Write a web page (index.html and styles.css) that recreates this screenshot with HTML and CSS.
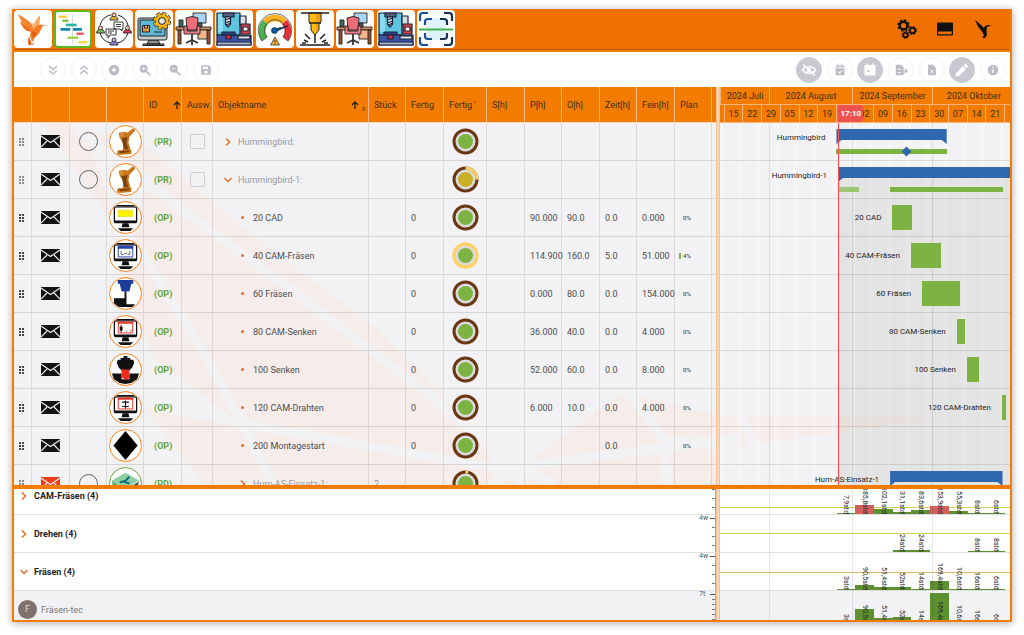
FILE: index.html
```
<!DOCTYPE HTML>
<html lang="de">

<head>
  <meta charset="utf-8">
  <title>Hummingbird Planung</title>
  <link rel="stylesheet" href="styles.css">
</head>

<body>

  <svg class="sprite" aria-hidden="true">
    <symbol id="bird" viewBox="0 0 38 38">
      <path fill="#f58634" d="M4 4l8 5 6 5 2 7-4 0C10 16 6 10 4 4z"/>
      <path fill="#ee6a1a" d="M6 11l9 8 4 3-6-1C9 18 7 15 6 11z"/>
      <path fill="#ffa45c" d="M26 5l-4 5-3 7 1 3 4-2c2-4 2-9 2-13z"/>
      <path fill="#f47b20" d="M21 18l3-3 3-.500 2 1 4.500-.500-5 1.500-1.500 3-2 4-4 4-3 5-2-7 1-5z"/>
      <path fill="#e8590c" d="M15 26l2.500 8 3-1-1 1.500-5 .5-.5-4z"/>
      <path fill="#ffb980" d="M18 14l2-2 0 8z"/>
      <path fill="#d95a10" d="M18 22l5 1-4 5z"/>
    </symbol>
    <symbol id="gantt" viewBox="0 0 38 38">
      <path stroke="#ccd3d6" d="M18.500 3v32"/>
      <path fill="#ffc928" d="M3 4h9v2.500H3z"/>
      <path fill="#7cc242" d="M7 8.500h7V11H7z"/>
      <path fill="#26b5a5" d="M11 13h12v3H11z"/>
      <path fill="#1587b5" d="M5 18h11v3H5zm14 0h10v3H19z"/>
      <path fill="#ec4a4a" d="M23 23h8v2.500h-8z"/>
      <path fill="#9ccc3c" d="M13 27.500h12V30H13z"/>
      <path fill="#ffd23e" d="M25 32.500h10V35H25z"/>
    </symbol>
    <symbol id="team" viewBox="0 0 38 38">
      <circle cx="19" cy="19" r="14.500" fill="none" stroke="#222" stroke-dasharray="16 6.800" stroke-dashoffset="-3.500"/>
      <g stroke="#222" stroke-width=".9">
        <path fill="#f5b731" d="M15 10c0-5 8-5 8 0z"/><circle cx="19" cy="5" r="2" fill="#ffd9b3"/>
        <path fill="#8d84d8" d="M15 35c0-5 8-5 8 0z"/><circle cx="19" cy="30" r="2" fill="#c9b8ef"/>
        <path fill="#86c25a" d="M1.500 23c0-5 8-5 8 0z"/><circle cx="5.500" cy="18" r="2" fill="#ffd9b3"/>
        <path fill="#e5395b" d="M28.500 23c0-5 8-5 8 0z"/><circle cx="32.500" cy="18" r="2" fill="#ffd9b3"/>
        <path fill="#fff" d="M19 12h9v7h-1v2l-2-2h-6zM11 19h10v6h-6l-2 3v-3h-2z"/>
        <path fill="none" d="M21 14.500h5m-5 2h5M13 21h6m-6 2h4"/>
      </g>
    </symbol>
    <symbol id="pcgear" viewBox="0 0 38 38">
      <g stroke="#222" stroke-linejoin="round">
        <path fill="#8b949c" d="M14 30h9l2 4H12zM8 34h21v1.500H8z"/>
        <rect x="3" y="8" width="29" height="22" rx="2" fill="#c3cbd0"/>
        <path fill="#5cb8d6" d="M5 10h25v16H5z"/>
        <path fill="#e39a3d" d="M7.500 15.500h7V22h-7z"/><path fill="#f7d07a" d="M9.500 15.500h3v2.500h-3z"/>
        <path fill="none" d="M19 22h8"/>
      </g>
      <circle cx="27" cy="11" r="7.600" fill="none" stroke="#222" stroke-width="3" stroke-dasharray="4 1.970"/>
      <circle cx="27" cy="11" r="7" fill="#f7b512" stroke="#222" stroke-width=".8"/>
      <circle cx="27" cy="11" r="7.400" fill="none" stroke="#f7b512" stroke-width="2" stroke-dasharray="3.200 2.610" stroke-dashoffset="-.4"/>
      <circle cx="27" cy="11" r="3.400" fill="#e9edf0" stroke="#222"/>
    </symbol>
    <symbol id="desk" viewBox="0 0 38 38">
      <g stroke="#222" stroke-width=".9" stroke-linejoin="round">
        <path fill="#a8d4f5" d="M18 3h13v10H18z"/><path fill="#555" d="M23 13h4v4h-4z"/>
        <path fill="#3d6b58" d="M4 10h4v7H4z"/>
        <path fill="#d98b62" d="M1 17h35v3H1z"/><path fill="#f2b58e" d="M23 20h11v9H23z"/>
        <path fill="#9c4f30" d="M3 20h3v14H3zM32 20h3v14h-3z"/>
        <path fill="#ec6c77" d="M11 8q6-3 12 0l-1 12H12z"/>
        <path fill="#ef7d86" d="M9 16h3v5h10v-5h3v8H9z"/>
        <path fill="none" stroke-width="1.800" stroke="#333" d="M17 24v6l-6 3m6-3l6 3m-6-3v5"/>
      </g>
    </symbol>
    <symbol id="cnc" viewBox="0 0 38 38">
      <g stroke="#1c2238" stroke-width="1.200" stroke-linejoin="round">
        <path fill="#5dc5e0" d="M2 3h23v22H2z"/><path fill="#8adcf0" stroke="none" d="M3 4h5v18H3z"/>
        <path fill="#55607e" d="M8 3h11v4H8z"/><path fill="#dfe5ea" d="M10.500 7h5v7L13 17l-2.500-3z"/>
        <path d="M10 10l6-2m-6 5l6-2m-5 4l5-2" fill="none"/>
        <path fill="#d7dde2" d="M25 6h6v9h-6z"/><path fill="#e0444e" d="M26 14h9v10h-9z"/>
        <path fill="#fff" d="M28 17h5v4h-5z"/>
        <path fill="#3a55a6" d="M2 25h34v10H2z"/><path fill="#2f4488" d="M7 22h13v3H7z"/>
        <path fill="#e5232e" d="M11 25h5v4h-5z"/><path fill="#dfe5ea" d="M23 26h12v3H23z"/>
        <path fill="#a5b2d3" d="M2 32h34v3H2z"/>
      </g>
    </symbol>
    <symbol id="gauge" viewBox="0 0 38 38">
      <g fill="none" stroke-width="6.500">
        <path stroke="#4caf50" d="M8.500 29A13.500 13.500 0 0 1 9.500 12"/>
        <path stroke="#fbb01e" d="M9.500 12A13.500 13.500 0 0 1 28.500 12"/>
        <path stroke="#e5323c" d="M28.500 12A13.500 13.500 0 0 1 29.500 29"/>
      </g>
      <path fill="none" stroke="#333" stroke-width=".7" d="M6 31A16.800 16.800 0 1 1 32 31L27 27A10.500 10.500 0 1 0 11 27z"/>
      <path fill="#0d4a86" stroke="#122" stroke-width=".6" d="M18 19l14-3-13 6z"/>
      <circle cx="18.500" cy="20.500" r="3" fill="#0d5aa7" stroke="#122" stroke-width=".6"/>
      <path fill="#f9b233" stroke="#333" stroke-width=".8" d="M19 27l4.500 8h-9z"/>
      <path stroke="#222" d="M19 30v2.500m0 .8v1"/>
    </symbol>
    <symbol id="laser" viewBox="0 0 38 38">
      <g stroke="#222" stroke-linejoin="round">
        <path fill="#fdbb12" d="M13 3h12v9l-2 2v6l-4 5-4-5v-6l-2-2z"/>
        <path fill="#f39c12" stroke="none" d="M20 4h4v8l-2 2v5l-2 3z"/>
        <path fill="none" stroke-width="1.500" d="M5 3h28M19 25v8M4 35h30M8 30l4 2M9 24l5 5M6 33h4M30 30l-4 2M29 24l-5 5M32 33h-4M13 13h12"/>
      </g>
    </symbol>
    <symbol id="scan" viewBox="0 0 38 38">
      <path fill="#dff4fa" d="M10 8h18v22H10z"/>
      <g fill="none" stroke="#1b4f9a" stroke-width="2.200">
        <path d="M3 11V6q0-3 3-3h5M8 15v-3q0-3 3-3h4M3 27v5q0 3 3 3h5M8 23v3q0 3 3 3h4"/>
        <path stroke="#182f55" d="M27 3h5q3 0 3 3v5M23 9h4q3 0 3 3v3M27 35h5q3 0 3-3v-5M23 29h4q3 0 3-3v-3"/>
      </g>
      <path stroke="#3cb44a" stroke-width="2" d="M2 19.500h34"/>
    </symbol>

    <symbol id="gears" viewBox="0 0 20 20">
      <g fill="none" stroke="#111">
        <circle cx="6.500" cy="6.500" r="3.800" stroke-width="2.400"/>
        <circle cx="6.500" cy="6.500" r="5.300" stroke-width="1.800" stroke-dasharray="2.200 1.960"/>
        <circle cx="15.500" cy="11.500" r="2.600" stroke-width="1.900"/>
        <circle cx="15.500" cy="11.500" r="3.800" stroke-width="1.300" stroke-dasharray="1.600 1.380"/>
        <circle cx="8.500" cy="16" r="2.200" stroke-width="1.700"/>
        <circle cx="8.500" cy="16" r="3.300" stroke-width="1.200" stroke-dasharray="1.400 1.190"/>
      </g>
    </symbol>
    <symbol id="dock" viewBox="0 0 20 20">
      <path fill="#111" fill-rule="evenodd" d="M3 3.500h14q1 0 1 1v11q0 1-1 1H3q-1 0-1-1v-11q0-1 1-1zM3.300 12.500v2.700h13.400v-2.700z"/>
    </symbol>
    <symbol id="birdblack" viewBox="0 0 20 20">
      <path fill="#111" d="M2 1l5 4 4 4 1-2 3-1 3 .500-4 1.500-.500 3 .500 5-2 3-3-.5 2-2-2-4-4-5z"/>
    </symbol>

    <symbol id="down2" viewBox="0 0 16 16"><path fill="none" stroke="currentColor" stroke-width="1.600" d="M3.500 3.500L8 7.500l4.500-4M3.500 8.500L8 12.500l4.500-4"/></symbol>
    <symbol id="up2" viewBox="0 0 16 16"><path fill="none" stroke="currentColor" stroke-width="1.600" d="M3.500 7.500L8 3.500l4.500 4M3.500 12.500L8 8.500l4.500 4"/></symbol>
    <symbol id="plus" viewBox="0 0 16 16"><circle cx="8" cy="8" r="6" fill="currentColor"/><path stroke="#fff" stroke-width="1.500" d="M5.500 8h5M8 5.500v5"/></symbol>
    <symbol id="zoomin" viewBox="0 0 16 16"><circle cx="6.500" cy="6.500" r="4.500" fill="currentColor"/><path stroke="currentColor" stroke-width="2" d="M9 9l5 5"/><path stroke="#fff" d="M4.500 6.500h4m-2-2v4"/></symbol>
    <symbol id="zoomout" viewBox="0 0 16 16"><circle cx="6.500" cy="6.500" r="4.500" fill="currentColor"/><path stroke="currentColor" stroke-width="2" d="M9 9l5 5"/><path stroke="#fff" d="M4.500 6.500h4"/></symbol>
    <symbol id="save" viewBox="0 0 16 16"><path fill="currentColor" fill-rule="evenodd" d="M3 2.500h8L13.500 5v8.500h-11v-10zM4.300 4.200v2.600h6V4.200zM8 8.500a1.900 1.900 0 1 0 .1 0z"/></symbol>
    <symbol id="eyeoff" viewBox="0 0 16 16"><path fill="none" stroke="currentColor" stroke-width="1.500" d="M1.500 8C4 3.800 12 3.800 14.500 8 12 12.200 4 12.200 1.500 8z"/><circle cx="8" cy="8" r="2.300" fill="currentColor"/><path stroke="currentColor" stroke-width="1.500" d="M2 2.500l12 11"/></symbol>
    <symbol id="calcheck" viewBox="0 0 16 16"><path fill="currentColor" d="M3 3h10v11H3zM5 1.500h1.500V4H5zm4.500 0H11V4H9.500z"/><path fill="none" stroke="#fff" stroke-width="1.200" d="M3 5.500h10M5.500 9.500l2 2 3.500-3.500"/></symbol>
    <symbol id="calday" viewBox="0 0 16 16"><path fill="currentColor" d="M2.500 3h11v10.500h-11zM4.500 1.500H6V4H4.500zm5.500 0h1.500V4H10z"/><path fill="#c9c7cf" d="M5 8h2.500v2H5z"/></symbol>
    <symbol id="export" viewBox="0 0 16 16"><path fill="currentColor" d="M2 2h6l3 3v9H2z"/><path fill="none" stroke="#fff" d="M4 7h4M4 11h4"/><path fill="none" stroke="currentColor" stroke-width="1.400" d="M9 9h5.500M12.500 6.500L15 9l-2.500 2.500"/></symbol>
    <symbol id="excel" viewBox="0 0 16 16"><path fill="currentColor" d="M3.500 2H9l3.500 3.500V14h-9z"/><path fill="none" stroke="#fff" d="M6 7.500l4 4.500m0-4.500L6 12"/></symbol>
    <symbol id="pen" viewBox="0 0 16 16"><path fill="currentColor" d="M11.500 1.500l3 3-1.800 1.800-3-3zM9 4l3 3-7 7-3.500.5L2 11z"/></symbol>
    <symbol id="info" viewBox="0 0 16 16"><circle cx="8" cy="8" r="6" fill="currentColor"/><path stroke="#fff" stroke-width="1.500" d="M8 7v4.500M8 4.300v1.500"/></symbol>

    <symbol id="mail" viewBox="0 0 19 13">
      <path fill="currentColor" d="M0 0h19v13H0z"/>
      <path fill="none" stroke="#f2f2f4" stroke-width="1.100" d="M0 1l9.500 6.500L19 1M0 12l6-6m13 6l-6-6"/>
    </symbol>
    <symbol id="drag" viewBox="0 0 5 8"><path fill="currentColor" d="M0 0h2v2H0zm3 0h2v2H3zM0 3h2v2H0zm3 0h2v2H3zM0 6h2v2H0zm3 0h2v2H3z"/></symbol>
    <symbol id="sortup" viewBox="0 0 8 8"><path fill="none" stroke="currentColor" stroke-width="1.300" d="M4 8V1M1 4l3-3 3 3"/></symbol>
    <symbol id="right" viewBox="0 0 8 8"><path fill="none" stroke="currentColor" stroke-width="1.500" d="M2 .5L5.500 4 2 7.500"/></symbol>
    <symbol id="down" viewBox="0 0 8 8"><path fill="none" stroke="currentColor" stroke-width="1.500" d="M.5 2L4 5.500 7.500 2"/></symbol>

    <!-- Objektsymbole -->
    <symbol id="robot" viewBox="0 0 32 32">
      <path fill="#c6761b" d="M24 2l2 3-6 6-1 6 2 6-1 1h2v5l-13 1-2-2 1-3h5l1-7-4-6-1-5 6-1 3 1z"/>
      <path fill="#7d430c" d="M12 13l6-2-1 7 2 6h-4l-2-6zM9 26l12-1-2 2-8 1z"/>
      <path fill="#e09337" d="M10 8l5-1-3 5z"/>
    </symbol>
    <symbol id="screen" viewBox="0 0 32 32">
      <path fill="#111" d="M13 22h6l1 4h-8zM8 27h16l-3 3H11zM7 3h18v1.500H7z"/>
      <rect x="4.500" y="5" width="23" height="16" rx="2" fill="#fff" stroke="#111" stroke-width="1.300"/>
      <path fill="#111" d="M4 19h24v1.500Q28 22 26.500 22h-21Q4 22 4 20.500z"/>
    </symbol>
    <symbol id="cad" viewBox="0 0 32 32"><use href="#screen"/><path fill="#fff200" stroke="#e0c800" stroke-width=".5" d="M8.500 8.500h15v6.500h-15z"/></symbol>
    <symbol id="cam" viewBox="0 0 32 32"><use href="#screen"/><path fill="#fff" stroke="#2a44b0" d="M8.500 6.500h15v11h-15z"/><path fill="#2a44b0" d="M8 6h16v3H8z"/><path fill="none" stroke="#555" stroke-width=".9" d="M11.500 11.500V15h2l1-1h3l1 1h2v-3.500"/></symbol>
    <symbol id="camred" viewBox="0 0 32 32"><use href="#screen"/><path fill="#fff" stroke="#e8362a" d="M8.500 6.500h15v11h-15z"/><path fill="#e8362a" d="M8 6h16v2H8z"/><path fill="#111" d="M10 11h3v4h-3zM11 9h1v8h-1z"/><path fill="none" stroke="#777" stroke-width=".8" d="M16 15.500h2m2 0h2v-2"/></symbol>
    <symbol id="camwire" viewBox="0 0 32 32"><use href="#screen"/><path fill="#fff" stroke="#e8362a" d="M8.500 6.500h15v11h-15z"/><path fill="#e8362a" d="M8 6h16v2H8z"/><path fill="none" stroke="#111" stroke-width="1.200" d="M16 9v8M12.500 10.500h7M12.500 15h7"/></symbol>
    <symbol id="mill" viewBox="0 0 32 32"><path fill="#1d3c9c" d="M8 2h16v4h-2l-2 8h-8L10 6H8z"/><path fill="#111" d="M15 14h2v13h9l-3 3H9l-5-4v-5h11z"/></symbol>
    <symbol id="sink" viewBox="0 0 32 32"><path fill="#111" d="M8 6h3V4h3V2h4v2h3v2h3l1 3-2 5-3 3H12l-3-3-2-5z"/><path fill="#111" d="M2 20h10v6h8v-6h10l-2 6-6 4-6 1-6-1-6-4z"/><path fill="#ef2b1f" d="M12 16h8v8l-1 2h-4l-3-2z"/></symbol>
    <symbol id="rhomb" viewBox="0 0 32 32"><path fill="#000" d="M16 1l12.500 15L16 31 3.500 16z"/></symbol>
    <symbol id="plate" viewBox="0 0 32 32"><path fill="#8ecfa2" d="M2 13L16 5l14 8-14 8z"/><path fill="#5dae7a" d="M2 13l14 9v8L3 21z"/><path fill="#3b5e49" d="M16 22l14-8-2 8-12 8z"/><path fill="none" stroke="#0a6d79" stroke-width="2" d="M10 15l6-2 4-4m-6 5l6 2"/></symbol>
  </svg>

  <div class="app">
    <header class="topbar">
      <nav class="tiles" aria-label="Module">
        <button class="tile" aria-label="Start"><svg><use href="#bird"/></svg></button>
        <button class="tile tile-active" aria-label="Plantafel"><svg><use href="#gantt"/></svg></button>
        <button class="tile" aria-label="Team"><svg><use href="#team"/></svg></button>
        <button class="tile" aria-label="Artikel"><svg><use href="#pcgear"/></svg></button>
        <button class="tile" aria-label="Arbeitsplatz"><svg><use href="#desk"/></svg></button>
        <button class="tile" aria-label="Maschine"><svg><use href="#cnc"/></svg></button>
        <button class="tile" aria-label="Leistung"><svg><use href="#gauge"/></svg></button>
        <button class="tile" aria-label="Laser"><svg><use href="#laser"/></svg></button>
        <button class="tile" aria-label="Arbeitsplatz 2"><svg><use href="#desk"/></svg></button>
        <button class="tile" aria-label="Maschine 2"><svg><use href="#cnc"/></svg></button>
        <button class="tile" aria-label="Scan"><svg><use href="#scan"/></svg></button>
      </nav>
      <div class="top-actions">
        <button class="top-button" aria-label="Einstellungen"><svg><use href="#gears"/></svg></button>
        <button class="top-button" aria-label="Ansicht"><svg><use href="#dock"/></svg></button>
        <button class="top-button" aria-label="Info"><svg><use href="#birdblack"/></svg></button>
      </div>
    </header>

    <div class="toolbar">
      <div class="tools tools-left">
        <button class="tool" aria-label="Alle öffnen"><svg><use href="#down2"/></svg></button>
        <button class="tool" aria-label="Alle schließen"><svg><use href="#up2"/></svg></button>
        <button class="tool" aria-label="Neu"><svg><use href="#plus"/></svg></button>
        <button class="tool" aria-label="Vergrößern"><svg><use href="#zoomin"/></svg></button>
        <button class="tool" aria-label="Verkleinern"><svg><use href="#zoomout"/></svg></button>
        <button class="tool" aria-label="Speichern"><svg><use href="#save"/></svg></button>
      </div>
      <div class="tools tools-right">
        <button class="tool tool-on" aria-label="Ausblenden"><svg><use href="#eyeoff"/></svg></button>
        <button class="tool" aria-label="Termine"><svg><use href="#calcheck"/></svg></button>
        <button class="tool tool-on" aria-label="Heute"><svg><use href="#calday"/></svg></button>
        <button class="tool" aria-label="Export"><svg><use href="#export"/></svg></button>
        <button class="tool" aria-label="Excel"><svg><use href="#excel"/></svg></button>
        <button class="tool tool-on" aria-label="Bearbeiten"><svg><use href="#pen"/></svg></button>
        <button class="tool" aria-label="Hilfe"><svg><use href="#info"/></svg></button>
      </div>
    </div>

    <main class="plan">
      <svg class="watermark" viewBox="14 123 996 362" preserveAspectRatio="none" aria-hidden="true">
        <g fill="#f6ece9">
          <path d="M44 123h16l30 20 20 60-1 15z"/>
          <path d="M60 123l84 22 116 96 115 86 70 68-40-12-175-140-84-70z"/>
          <path d="M144 190l40 14 100 80 180 130 30 50-250-36-90-70-30-80z"/>
          <path d="M144 408l120 20 225 35 10 22H205z"/>
          <path d="M528 462l94-70 88 22 40 3 200 0-190 26-40 10-2 32H500z"/>
        </g>
        <g stroke="#f2f2f4" stroke-width="9" fill="none">
          <path d="M75 128l120 92 100 72 140 108 70 60"/>
          <path d="M140 250l65 105 30 55 38 75"/>
          <path d="M150 405l110 22 240 42 110-14 130-18"/>
          <path d="M625 390l40 50 85 10M665 440l2 45M740 415l20 40-30 30M515 470l-25 15M520 470v15M525 470l30 15M720 450l40 3"/>
        </g>
      </svg>

      <div class="tree">
        <table class="tasks">
          <colgroup>
            <col class="w-drag"><col class="w-38"><col class="w-37"><col class="w-37"><col class="w-38"><col class="w-31">
            <col><col class="w-37"><col class="w-38"><col class="w-43"><col class="w-38"><col class="w-37">
            <col class="w-38"><col class="w-37"><col class="w-38"><col class="w-37"><col class="w-end">
          </colgroup>
          <thead>
            <tr>
              <th></th><th></th><th></th><th></th>
              <th><span class="sort">ID <svg><use href="#sortup"/></svg></span></th>
              <th>Ausw.</th>
              <th><span class="sort">Objektname <svg><use href="#sortup"/></svg><sub>3</sub></span></th>
              <th>Stück</th><th>Fertig</th><th>Fertig '</th><th>S[h]</th><th>P[h]</th>
              <th>O[h]</th><th>Zeit[h]</th><th>Fein[h]</th><th>Plan</th><th></th>
            </tr>
          </thead>
          <tbody id="task-body"></tbody>
        </table>
      </div>
      <div class="splitter"></div>
      <div class="gantt">
        <div class="months" id="months"></div>
        <div class="weeks" id="weeks"></div>
        <div class="gantt-rows" id="gantt-rows"></div>
      </div>
    </main>

    <section class="load">
      <div class="tree" id="groups"></div>
      <div class="splitter"></div>
      <div class="gantt" id="histogram"></div>
    </section>
  </div>

  <script src="script.js"></script>

</body>

</html>
```
FILE: styles.css
```
* {
  box-sizing: border-box;
}

body {
  margin: 0;
  padding: 9px 12px 13px;
  height: 100vh;
  background: #fff;
  font-family: Roboto, "Liberation Sans", sans-serif;
  font-size: 9px;
  color: #4c4c4c;
}

button {
  padding: 0;
  border: none;
  background: none;
  font: inherit;
}

.sprite {
  display: none;
}

.app {
  display: flex;
  flex-direction: column;
  height: 100%;
  border: 2px solid #f57c00;
  border-top: none;
  box-shadow: 0 1px 8px rgba(0, 0, 0, .35);
  overflow: hidden;
}

/* Kopfzeile */

.topbar {
  display: flex;
  justify-content: space-between;
  align-items: center;
  flex: none;
  height: 41px;
  background: #f07000;
  border-bottom: 1px solid #b95a08;
}

.tiles {
  display: flex;
  justify-content: space-between;
  width: 441px;
}

.tile {
  width: 38px;
  height: 38px;
  border-radius: 4px;
  background: #fff;
}

.tile svg {
  display: block;
  width: 100%;
  height: 100%;
}

.tile-active {
  border: 2px solid #5fb71c;
}

.top-actions {
  display: flex;
  gap: 18px;
  padding-right: 17px;
}

.top-button svg {
  display: block;
  width: 20px;
  height: 20px;
}

.toolbar {
  display: flex;
  justify-content: space-between;
  align-items: center;
  flex: none;
  height: 37px;
  padding: 0 4px 0 26px;
  border-top: 2px solid #f57c00;
  background: #fff;
}

.tools {
  display: flex;
  justify-content: space-between;
}

.tools-left {
  width: 179px;
}

.tools-right {
  width: 210px;
}

.tool {
  display: flex;
  align-items: center;
  justify-content: center;
  width: 26px;
  height: 26px;
  border: 1px solid #f3f2f4;
  border-radius: 50%;
  color: #bcbac2;
}

.tool svg {
  width: 14px;
  height: 14px;
}

.tool-on {
  border-color: #c9c7cf;
  background: #c9c7cf;
  color: #fff;
}

.tool-on svg {
  width: 16px;
  height: 16px;
}

/* Plantafel */

.plan {
  position: relative;
  display: flex;
  flex: 1;
  min-height: 0;
  background: #f2f2f4;
  overflow: hidden;
}

.watermark {
  position: absolute;
  top: 36px;
  left: 0;
  width: 100%;
  height: calc(100% - 36px);
}

.tree {
  position: relative;
  flex: 702 1 0;
  min-width: 0;
  overflow: hidden;
}

.splitter {
  position: relative;
  flex: 0 0 4px;
  background: #fbd9bf;
  border: solid #f8c08f;
  border-width: 0 1px;
}

.gantt {
  position: relative;
  flex: 290 1 0;
  min-width: 0;
  overflow: hidden;
}

.tasks {
  width: 100%;
  table-layout: fixed;
  border-spacing: 0;
}

.w-drag { width: 18px; }
.w-31 { width: 31px; }
.w-37 { width: 37px; }
.w-38 { width: 38px; }
.w-43 { width: 43px; }
.w-end { width: 4px; }

.tasks th {
  height: 36px;
  padding: 0 0 0 5px;
  border-right: 1px solid #f6b887;
  border-bottom: 1px solid #f8d5b8;
  background: #f27b00;
  color: #43301f;
  font-weight: 400;
  text-align: left;
  white-space: nowrap;
}

.tasks th:last-child,
.tasks td:last-child {
  border-right: none;
}

.sort {
  display: flex;
  align-items: center;
}

.sort svg {
  width: 8px;
  height: 8px;
  margin-left: auto;
  color: #222;
}

.sort sub {
  align-self: flex-end;
  width: 9px;
  font-size: 5px;
  line-height: 1px;
  text-align: center;
}

.tasks td {
  height: 38px;
  padding: 0 0 0 5px;
  border-right: 1px solid rgba(120, 110, 100, .18);
  border-bottom: 1px solid rgba(120, 110, 100, .22);
  white-space: nowrap;
}

.tasks .mid {
  padding: 0;
  text-align: center;
}

.tasks .mid > * {
  display: block;
  margin: 0 auto;
}

.tasks .mid > .drag {
  width: 5px;
  height: 8px;
  margin-left: 5px;
  color: #444;
}

.parent .drag {
  opacity: .6;
}

.mail {
  width: 19px;
  height: 13px;
  color: #111;
}

.mail-red {
  color: #f03c14;
}

.pick {
  appearance: none;
  width: 19px;
  height: 19px;
  border: 1px solid #666;
  border-radius: 50%;
}

.check {
  appearance: none;
  width: 15px;
  height: 15px;
  border: 1px solid #cfcfd2;
  border-radius: 1px;
}

.type {
  display: block;
  width: 33px;
  height: 33px;
  border: 1px solid #f58220;
  border-radius: 50%;
  background: #fff;
  overflow: hidden;
}

.type svg {
  display: block;
  width: 31px;
  height: 31px;
}

.tasks .mid > .type {
  margin-left: 2px;
}

.type-pd {
  border-color: #6cab3c;
}

.tasks .code {
  padding-left: 10px;
  color: #62a53a;
  font-weight: 700;
}

.name {
  display: flex;
  align-items: center;
  gap: 6px;
  padding-left: 6px;
}

.name-sub {
  padding-left: 21px;
}

.parent .name,
.parent .count {
  color: #9a9a9c;
}

.arrow {
  width: 8px;
  height: 8px;
  color: #e0702a;
}

.name-op {
  gap: 9px;
  padding-left: 23px;
}

.name-op::before {
  content: "";
  width: 3px;
  height: 3px;
  border-radius: 50%;
  background: #e0702a;
}

.donut {
  width: 27px;
  height: 27px;
}

.tasks .share {
  padding-left: 4px;
  font-size: 6px;
  font-weight: 500;
}

.share span {
  display: inline-block;
  width: 2px;
  height: 6px;
  margin-right: 2px;
  vertical-align: middle;
}

.share .some {
  background: #7cb342;
}

/* Zeitachse */

.months,
.weeks {
  position: relative;
  height: 18px;
  background: #f27b00;
  border-bottom: 1px solid #f8b478;
  color: #43301f;
  line-height: 18px;
  text-align: center;
  overflow: hidden;
}

.months span,
.weeks span {
  position: absolute;
  top: 0;
  height: 100%;
  border-left: 1px solid #f8b478;
  white-space: nowrap;
}

.weeks .now {
  z-index: 1;
  width: 25px;
  border: none;
  border-radius: 0 3px 3px 0;
  background: #ef5350;
  color: #fff;
  font-size: 8px;
  font-weight: 700;
}

.gantt-rows {
  position: relative;
  background: repeating-linear-gradient(90deg, transparent 1.300%, transparent 5.900%, rgba(255, 255, 255, .25) 5.900%, rgba(255, 255, 255, .25) 7.746%);
}

.future {
  position: absolute;
  top: 44px;
  right: 0;
  bottom: 0;
  background: rgba(40, 40, 30, .07);
}

.now-line {
  position: absolute;
  top: 0;
  bottom: 0;
  width: 1px;
  background: #ff4b4b;
}

.month-line {
  position: absolute;
  top: 0;
  bottom: 0;
  width: 1px;
  background: rgba(0, 0, 0, .09);
}

.gantt-row {
  position: relative;
  height: 38px;
  border-bottom: 1px solid rgba(0, 0, 0, .1);
}

.gantt-row > * {
  position: absolute;
}

.bar {
  top: 6px;
  height: 25px;
  background: #7cb342;
}

.bar-sum {
  height: 15px;
  background: #3068b0;
  clip-path: polygon(0 0, 100% 0, 100% 15px, calc(100% - 5px) 11px, 5px 11px, 0 15px);
}

.progress {
  top: 26px;
  height: 5px;
  background: #7cb342;
}

.progress-light {
  background: #9cc873;
}

.stone {
  top: 25px;
  width: 7px;
  height: 7px;
  margin-left: -3px;
  background: #3068b0;
  transform: rotate(45deg);
}

.bar-label {
  top: 6px;
  margin-right: 11px;
  color: #222;
  font-size: 8px;
  line-height: 25px;
  white-space: nowrap;
}

.bar-label-sum {
  line-height: 17px;
}

/* Auslastung */

.load {
  display: flex;
  flex: 0 0 135px;
  border-top: 4px solid #f27b00;
  background: #fff;
  overflow: hidden;
}

.group,
.hist {
  position: relative;
  height: 38px;
  border-bottom: 1px solid #e0e0e3;
}

.group:first-child,
.hist:first-of-type {
  margin-top: -12px;
}

.group {
  display: flex;
  align-items: center;
  gap: 6px;
  padding-left: 6px;
  color: #222;
  font-weight: 700;
}

.resource {
  padding-left: 4px;
  gap: 4px;
  background: #f2f2f4;
  color: #777;
  font-weight: 400;
}

.avatar {
  width: 19px;
  height: 19px;
  border-radius: 50%;
  background: #80706f;
  color: #ddd;
  line-height: 19px;
  text-align: center;
}

.scale {
  align-self: stretch;
  width: 17px;
  margin-left: auto;
  padding-top: 3px;
  border-right: 1px solid #aaa;
  background: repeating-linear-gradient(#777 0, #777 1px, transparent 1px, transparent 9px) right 3px / 3px 35px no-repeat;
  background-position: right 3px;
  color: #555;
  font-size: 7px;
  font-weight: 400;
  line-height: 1px;
}

.scale::after {
  content: "";
  float: right;
  width: 5px;
  height: 1px;
  background: #555;
}

.resource .scale {
  background-image: repeating-linear-gradient(#777 0, #777 1px, transparent 1px, transparent 5px);
}

.hist > * {
  position: absolute;
  bottom: 0;
}

.hist-resource {
  background: #f2f2f4;
}

.limit {
  left: 0;
  right: 0;
  height: 1px;
  background: #d3d35a;
}

.limit-near {
  background: #e6b66a;
}

.work {
  background: #5d9130;
}

.over {
  background: #d1605e;
}

.hours {
  color: #222;
  font-size: 7px;
  line-height: 18px;
  text-align: right;
  white-space: nowrap;
  writing-mode: vertical-rl;
}
```
FILE: script.js
```
const VIEW_DAYS = 108.6;
const NOW = 44.3;

const pct = days => (days / VIEW_DAYS * 100).toFixed(2) + '%';
const icon = (id, cls) => `<svg class="${cls}"><use href="#${id}"/></svg>`;

const tasks = [
  { type: 'PR', icon: 'robot', name: 'Hummingbird:', arrow: 'right', label: 'Hummingbird', start: 43.6, days: 41.3, progress: [[43.6, 41.3]], stone: 69.7, inner: '#7cb342', rest: 0 },
  { type: 'PR', icon: 'robot', name: 'Hummingbird-1:', arrow: 'down', label: 'Hummingbird-1', start: 44.2, days: 80, progress: [[44.2, 7.9, 'progress-light'], [63.7, 42.1]], inner: '#c9b127', rest: 25 },
  { type: 'OP', icon: 'cad', name: '20 CAD', start: 64.6, days: 7.3, values: ['90.000', '90.0', '0.0', '0.000', '0%'], rest: 0 },
  { type: 'OP', icon: 'cam', name: '40 CAM-Fräsen', start: 71.5, days: 11.2, values: ['114.900', '160.0', '5.0', '51.000', '4%'], rest: 100 },
  { type: 'OP', icon: 'mill', name: '60 Fräsen', start: 75.7, days: 14, values: ['0.000', '80.0', '0.0', '154.000', '0%'], rest: 0 },
  { type: 'OP', icon: 'camred', name: '80 CAM-Senken', start: 88.6, days: 3.1, values: ['36.000', '40.0', '0.0', '4.000', '0%'], rest: 0 },
  { type: 'OP', icon: 'sink', name: '100 Senken', start: 92.5, days: 4.5, values: ['52.000', '60.0', '0.0', '8.000', '0%'], rest: 0 },
  { type: 'OP', icon: 'camwire', name: '120 CAM-Drahten', start: 105.6, days: 1.5, values: ['6.000', '10.0', '0.0', '4.000', '0%'], rest: 0 },
  { type: 'OP', icon: 'rhomb', name: '200 Montagestart', values: ['', '', '0.0', '', '0%'], rest: 0 },
  { type: 'PD', icon: 'plate', name: 'Hum-AS-Einsatz-1:', arrow: 'right', label: 'Hum-AS-Einsatz-1', start: 63.7, days: 42.1, count: 2, rest: 4 }
];

const donut = (inner, rest) => `
  <svg class="donut" viewBox="0 0 27 27">
    <circle cx="13.5" cy="13.5" r="11.5" fill="#dcdcde" stroke="${rest === 100 ? '#ffd166' : '#6b3612'}" stroke-width="3"/>
    <circle cx="13.5" cy="13.5" r="11.5" fill="none" stroke="#ffd166" stroke-width="3" pathLength="100"
      stroke-dasharray="${rest} 100" transform="rotate(-90 13.5 13.5)"/>
    <circle cx="13.5" cy="13.5" r="7.5" fill="${inner || '#7cb342'}"/>
  </svg>`;

const taskRow = function(t) {
  const parent = t.type !== 'OP';
  const values = t.values || ['', '', '', '', ''];
  const share = values[4];
  let nameClass = 'name';
  if (!parent) nameClass += ' name-op';
  if (t.type === 'PD') nameClass += ' name-sub';

  return `
    <tr class="${parent ? 'parent' : ''}">
      <td class="mid">${icon('drag', 'drag')}</td>
      <td class="mid">${icon('mail', t.type === 'PD' ? 'mail mail-red' : 'mail')}</td>
      <td class="mid">${parent ? `<input class="pick" type="radio" name="pick" aria-label="${t.name}">` : ''}</td>
      <td class="mid"><span class="type ${t.type === 'PD' ? 'type-pd' : ''}">${icon(t.icon, '')}</span></td>
      <td class="code">(${t.type})</td>
      <td class="mid">${t.type === 'PR' ? `<input class="check" type="checkbox" aria-label="Auswahl ${t.name}">` : ''}</td>
      <td><div class="${nameClass}">${t.arrow ? icon(t.arrow, 'arrow') : ''}${t.name}</div></td>
      <td class="count">${t.count || ''}</td>
      <td>${parent ? '' : '0'}</td>
      <td class="mid">${donut(t.inner, t.rest)}</td>
      <td></td>
      <td>${values[0]}</td>
      <td>${values[1]}</td>
      <td>${values[2]}</td>
      <td>${values[3]}</td>
      <td class="share">${share ? `<span class="${share === '0%' ? '' : 'some'}"></span>${share}` : ''}</td>
      <td></td>
    </tr>`;
};

const ganttRow = function(t) {
  if (t.start === undefined) return '<div class="gantt-row"></div>';
  const sum = t.type !== 'OP';
  let html = `<span class="bar-label ${sum ? 'bar-label-sum' : ''}" style="right:${pct(VIEW_DAYS - t.start)}">${t.label || t.name}</span>`;
  html += `<span class="bar ${sum ? 'bar-sum' : ''}" style="left:${pct(t.start)};width:${pct(t.days)}"></span>`;
  (t.progress || []).forEach(([start, days, cls]) => {
    html += `<span class="progress ${cls || ''}" style="left:${pct(start)};width:${pct(days)}"></span>`;
  });
  if (t.stone) html += `<span class="stone" style="left:${pct(t.stone)}"></span>`;
  return `<div class="gantt-row">${html}</div>`;
};

document.getElementById('task-body').innerHTML = tasks.map(taskRow).join('');

// Monate und Wochen, die aktuelle Woche wird von der Uhrzeit verdeckt
const months = [['2024 Juli', 0, 18.4], ['2024 August', 18.4, 31], ['2024 September', 49.4, 30], ['2024 Oktober', 79.4, 31]];
const weeks = ['15', '22', '29', '05', '12', '19', '', '02', '09', '16', '23', '30', '07', '14', '21', '28'];

document.getElementById('months').innerHTML = months.map(([text, start, days]) =>
  `<span style="left:${pct(start)};width:${pct(days)}">${text}</span>`).join('');

document.getElementById('weeks').innerHTML = weeks.map((text, i) =>
  `<span style="left:${pct(1.4 + i * 7)};width:${pct(7)}">${text}</span>`).join('') +
  `<span class="now" style="left:${pct(NOW)}">17:10</span>`;

const monthLines = months.slice(1).map(m => `<span class="month-line" style="left:${pct(m[1])}"></span>`).join('');

document.getElementById('gantt-rows').innerHTML =
  `<div class="future" style="left:${pct(NOW)}"></div>` + monthLines +
  tasks.map(ganttRow).join('') +
  `<div class="now-line" style="left:${pct(NOW)}"></div>`;

// Auslastung pro Woche: [Woche, Stunden, Höhe, überlastet]
const groups = [
  { name: 'CAM-Fräsen (4)', arrow: 'right', unit: '', limit: 6, load: [[0, '7,9', 1], [1, '185,8', 9, true], [2, '102,1', 5], [3, '31,1', 2], [4, '83,6', 4], [5, '153,9', 8, true], [6, '55,3', 3], [7, '8', 1], [8, '6', 1]] },
  { name: 'Drehen (4)', arrow: 'right', unit: '4w', limit: 18, load: [[3, '24', 2], [4, '24', 2], [7, '8', 1], [8, '8', 1]] },
  { name: 'Fräsen (4)', arrow: 'down', unit: '4w', limit: 17, near: true, load: [[0, '3', 1], [1, '90,5', 5], [2, '51,4', 3], [3, '52', 3], [4, '14', 1], [5, '169,4', 9], [6, '10,6', 1], [7, '16', 1], [8, '6', 1]] },
  { name: 'Fräsen-tec', avatar: 'F', unit: '7t', load: [[0, '3', 1], [1, '90,5', 19], [2, '51,4', 10], [3, '52', 11], [4, '14', 3], [5, '169,4', 35], [6, '10,6', 2], [7, '16', 3], [8, '6', 1]] }
];

document.getElementById('groups').innerHTML = groups.map(g => `
  <div class="group ${g.avatar ? 'resource' : ''}">
    ${g.avatar ? `<span class="avatar">${g.avatar}</span>` : icon(g.arrow, 'arrow')}
    <span>${g.name}</span>
    <span class="scale">${g.unit}</span>
  </div>`).join('');

document.getElementById('histogram').innerHTML = groups.map(g => {
  let html = g.limit ? `<span class="limit ${g.near ? 'limit-near' : ''}" style="bottom:${g.limit}px"></span>` : '';
  g.load.forEach(([week, hours, height, over]) => {
    const place = `left:${pct(43.7 + week * 7)};width:${pct(7)}`;
    html += `<span class="${over ? 'over' : 'work'}" style="${place};height:${height}px"></span>`;
    html += `<span class="hours" style="${place}">${hours}std</span>`;
  });
  return `<div class="hist ${g.avatar ? 'hist-resource' : ''}">${html}</div>`;
}).join('') + monthLines;
```
